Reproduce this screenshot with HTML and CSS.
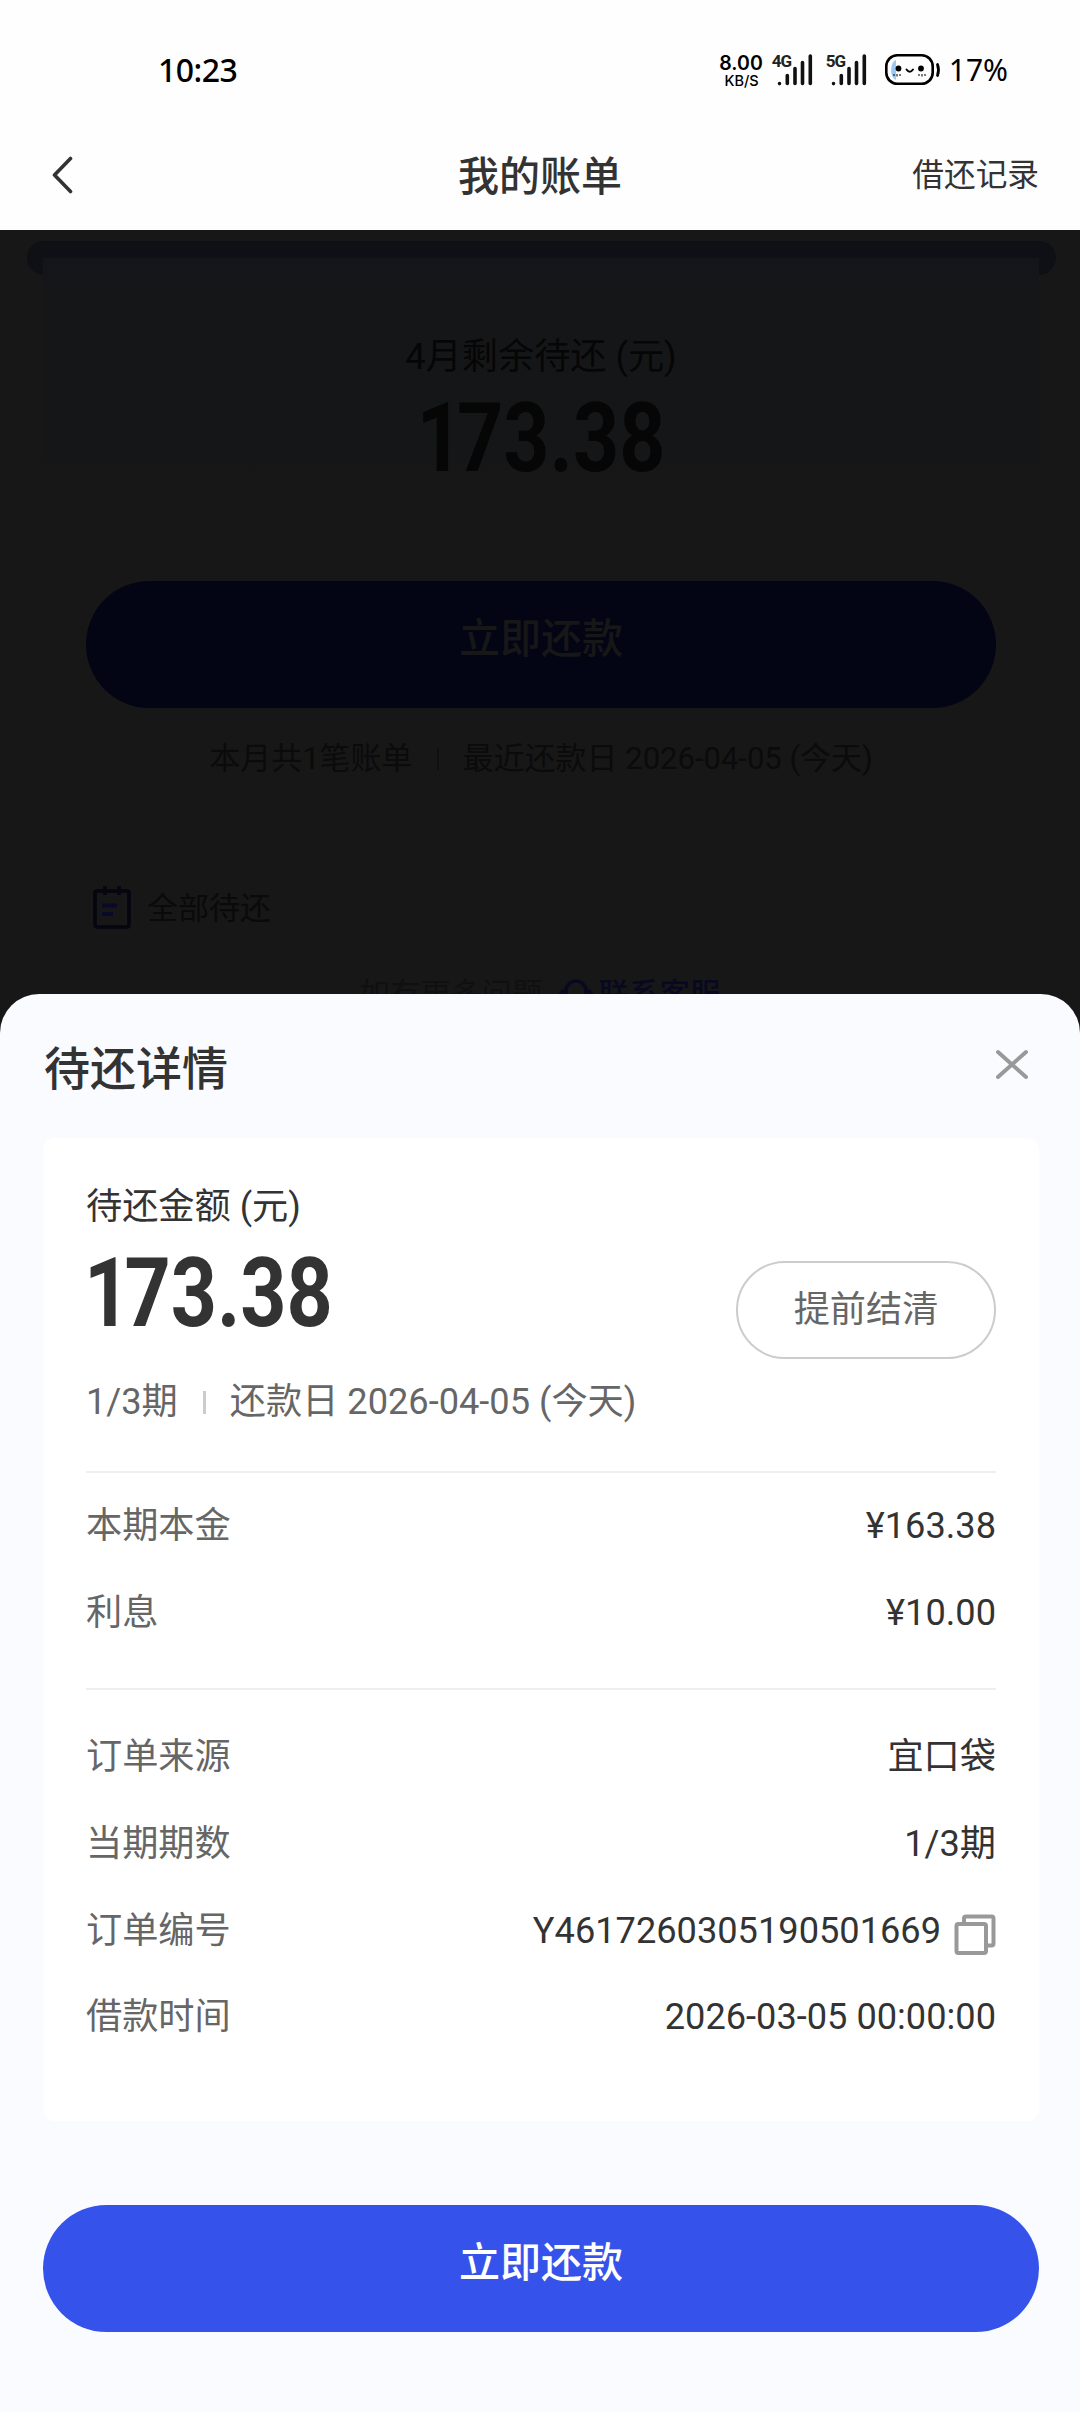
FILE: index.html
```html
<!DOCTYPE html>
<html lang="zh-CN">
<head>
<meta charset="utf-8">
<title>我的账单</title>
<link rel="stylesheet" href="styles.css">
</head>
<body>
<header class="top">
  <div class="status">
    <span class="time">10:23</span>
    <div class="speed"><b>8.00</b><span>KB/S</span></div>
    <div class="signal"><span class="net">4G</span>
      <svg width="40" height="34" viewBox="0 0 40 34"><path d="M6.500 30.500v.1M14.300 22.500v8M22 15.500v15M29.500 9.500v21M37.300 3v27.500" stroke="#111" stroke-width="3.600" stroke-linecap="round"/></svg>
    </div>
    <div class="signal second"><span class="net">5G</span>
      <svg width="40" height="34" viewBox="0 0 40 34"><path d="M6.500 30.500v.1M14.300 22.500v8M22 15.500v15M29.500 9.500v21M37.300 3v27.500" stroke="#111" stroke-width="3.600" stroke-linecap="round"/></svg>
    </div>
    <svg class="battery" width="56" height="32" viewBox="0 0 56 32">
      <path d="M11 6C5 8 4 23 11 26Z" fill="#9cc8f5"/>
      <rect x="1.300" y="1.300" width="46.400" height="28.400" rx="11" fill="none" stroke="#000" stroke-width="2.600"/>
      <path d="M52.500 10.500q2 5.500 0 11" fill="none" stroke="#000" stroke-width="2.800" stroke-linecap="round"/>
      <circle cx="13.500" cy="14.500" r="2.900"/><circle cx="36" cy="14.500" r="2.900"/>
      <path d="M21.500 15.500q3.200 4.500 6.500 0" fill="none" stroke="#000" stroke-width="2" stroke-linecap="round"/>
      <path d="M9 20v2M12 20v2.500M15 20v2M34 20v2M37 20v2.500M40 20v2" stroke="#222" stroke-width="1.200"/>
    </svg>
    <span class="percent">17%</span>
  </div>
  <nav class="nav">
    <svg class="back" width="24" height="38" viewBox="0 0 24 38"><path d="M19.500 2.500 3.500 19l16 16.500" fill="none" stroke="#333" stroke-width="3.600" stroke-linecap="round" stroke-linejoin="round"/></svg>
    <h1 class="title">我的账单</h1>
    <a class="records">借还记录</a>
  </nav>
</header>
<main class="bill">
  <div class="strip"></div>
  <section class="summary">
    <p class="caption">4月剩余待还 (元)</p>
    <div class="amount"><span class="one">1</span>73.38</div>
    <div class="btn dim">立即还款</div>
    <p class="note"><span>本月共1笔账单</span><i></i><span>最近还款日 2026-04-05 (今天)</span></p>
  </section>
  <section class="all">
    <svg width="38" height="44" viewBox="0 0 38 44"><g fill="none" stroke="#05060f" stroke-width="3.500"><rect x="2" y="6" width="34" height="36" rx="2"/><path d="M12 1v9M26 1v9"/></g><path d="M9 20.500h15M9 29h11" stroke="#080a28" stroke-width="4"/></svg>
    <span>全部待还</span>
  </section>
  <p class="help"><span>如有更多问题</span>
    <svg width="34" height="36" viewBox="0 0 34 36" fill="none" stroke="#080920" stroke-width="3.500"><path d="M7 18v-4a10 10 0 0 1 20 0v4M7 14H5a3 3 0 0 0-3 3v3a3 3 0 0 0 3 3h2zM27 14h2a3 3 0 0 1 3 3v3a3 3 0 0 1-3 3h-2zM27 23q-1 6-9 6"/></svg>
    <b>联系客服</b></p>
</main>
<section class="sheet">
  <div class="sheet-head">
    <h2>待还详情</h2>
    <svg width="34" height="31" viewBox="0 0 34 31"><path d="m3 3 28 25M31 3 3 28" stroke="#999" stroke-width="4" stroke-linecap="round"/></svg>
  </div>
  <div class="card">
    <div class="due">
      <div class="due-info">
        <p class="label">待还金额 (元)</p>
        <div class="amount"><span class="one">1</span>73.38</div>
        <p class="period"><span>1/3期</span><i></i><span>还款日 2026-04-05 (今天)</span></p>
      </div>
      <div class="settle">提前结清</div>
    </div>
    <div class="rows fees">
      <div class="row"><span>本期本金</span><b>¥163.38</b></div>
      <div class="row"><span>利息</span><b>¥10.00</b></div>
    </div>
    <div class="rows order">
      <div class="row"><span>订单来源</span><b>宜口袋</b></div>
      <div class="row"><span>当期期数</span><b>1/3期</b></div>
      <div class="row"><span>订单编号</span><b class="num">Y4617260305190501669<svg width="42" height="42" viewBox="0 0 42 42" fill="none" stroke="#999" stroke-width="4"><path d="M10 9V4.500Q10 2.500 12 2.500H37.500Q39.500 2.500 39.500 4.500V29.500Q39.500 31.500 37.500 31.500H33"/><rect x="2.500" y="10" width="29.500" height="29" rx="2"/></svg></b></div>
      <div class="row"><span>借款时间</span><b>2026-03-05 00:00:00</b></div>
    </div>
  </div>
  <div class="btn primary">立即还款</div>
</section>
</body>
</html>
```
FILE: styles.css
```css
* { box-sizing: border-box; margin: 0; padding: 0; }
body {
  width: 1080px;
  height: 2412px;
  overflow: hidden;
  background: #171717;
  color: #333;
  font-family: Roboto, "Noto Sans CJK SC", sans-serif;
  font-size: 36.200px;
}
b { font-weight: 400; }
svg { display: block; flex: none; }

.top { height: 230px; background: #fefefe; }
.status { display: flex; height: 120px; padding: 53px 72px 0 158px; align-items: flex-start; color: #000; }
.time { font: 500 32px/36px "Noto Sans", sans-serif; letter-spacing: -0.5px; margin-top: -1px; }
.speed { display: flex; flex-direction: column; align-items: center; margin-left: auto; font: 500 19.500px/20px Inter, sans-serif; }
.speed b { font-weight: 600; }
.speed span { font-size: 14.500px; line-height: 15px; margin-left: 1px; }
.signal { position: relative; margin-left: 10px; }
.net { position: absolute; left: -1px; top: 0; font: 700 17px/17px Roboto, sans-serif; letter-spacing: -1px; color: #222; }
.second { margin-left: 14px; }
.battery { margin: 1px 0 0 18px; }
.percent { font: 400 30px/34px "Noto Sans", Inter, sans-serif; margin-left: 8px; }
.nav { display: grid; grid-template-columns: 1fr auto 1fr; align-items: center; height: 110px; padding: 0 41px 0 51px; }
.title { font-size: 41px; font-weight: 500; line-height: 60px; margin: 3px 10px 0 0; }
.records { justify-self: end; font-size: 31.700px; line-height: 46px; margin-top: 2px; }

.bill { height: 764px; padding-top: 11px; overflow: hidden; color: #060606; }
.strip { height: 34px; margin: 0 24px 0 27px; border-radius: 17px; background: #0f1015; }
.summary {
  height: 587px;
  margin: -17px 41px 0 43px;
  padding-top: 72px;
  background: linear-gradient(#13151b, #151618 34px, #151617 188px, #171717 220px);
  text-align: center;
}
.caption { line-height: 54px; }
.amount { font-size: 96px; font-weight: 700; line-height: 100px; transform: scaleX(.84); }
.one { letter-spacing: -7px; }
.summary .amount { margin-top: 4px; }
.btn { display: flex; justify-content: center; height: 127px; border-radius: 64px; padding-top: 28px; font-size: 41px; font-weight: 500; line-height: 60px; }
.dim { margin: 93px 43px 0; background: #030515; color: #171717; }
.note { display: flex; justify-content: center; align-items: center; margin-top: 27px; font-size: 31px; line-height: 48px; color: #0b0b0b; }
.note i { width: 2px; height: 22px; margin: 0 24px; background: #101010; }
.all { display: flex; align-items: center; gap: 16px; height: 80px; margin: 20px 43px 0; padding-left: 50px; font-size: 31px; color: #0a0a0a; }
.all svg { margin-top: 3px; }
.help { display: flex; justify-content: center; margin-top: 28px; font-size: 30.500px; line-height: 44px; color: #101010; }
.help svg { margin: 4px 6px 0 16px; }
.help b { color: #080920; font-weight: 500; }

.sheet { height: 1418px; padding: 0 41px 0 43px; border-radius: 39px 39px 0 0; background: #fafbff; }
.sheet-head { display: flex; justify-content: space-between; height: 144px; padding: 41px 10px 0 0; }
.sheet-head h2 { font-size: 46px; font-weight: 500; line-height: 68px; margin-left: 1px; }
.sheet-head svg { margin-top: 14px; }
.card { height: 983px; padding: 0 43px; border-radius: 12px; background: #fff; }
.due { display: flex; justify-content: space-between; height: 335px; border-bottom: 2px solid #eee; }
.due-info { padding-top: 42px; }
.label { line-height: 54px; }
.due .amount { transform-origin: 0 50%; margin-top: 9px; margin-left: -2px; }
.period { display: flex; align-items: center; margin-top: 32px; line-height: 54px; color: #666; }
.period i { width: 3px; height: 23px; margin: 0 24px 0 25px; background: #ccc; }
.settle { width: 260px; height: 98px; margin-top: 123px; border: 2px solid #ccc; border-radius: 49px; color: #666; line-height: 94px; text-align: center; }
.fees { height: 217px; padding-top: 10px; border-bottom: 2px solid #eee; }
.order { padding-top: 24px; }
.row { display: flex; justify-content: space-between; height: 86.800px; line-height: 86.800px; color: #666; }
.row b { color: #333; }
.num { display: flex; gap: 13px; }
.num svg { margin-top: 26px; }
.primary { margin-top: 84px; background: #3553eb; color: #fff; }
```
